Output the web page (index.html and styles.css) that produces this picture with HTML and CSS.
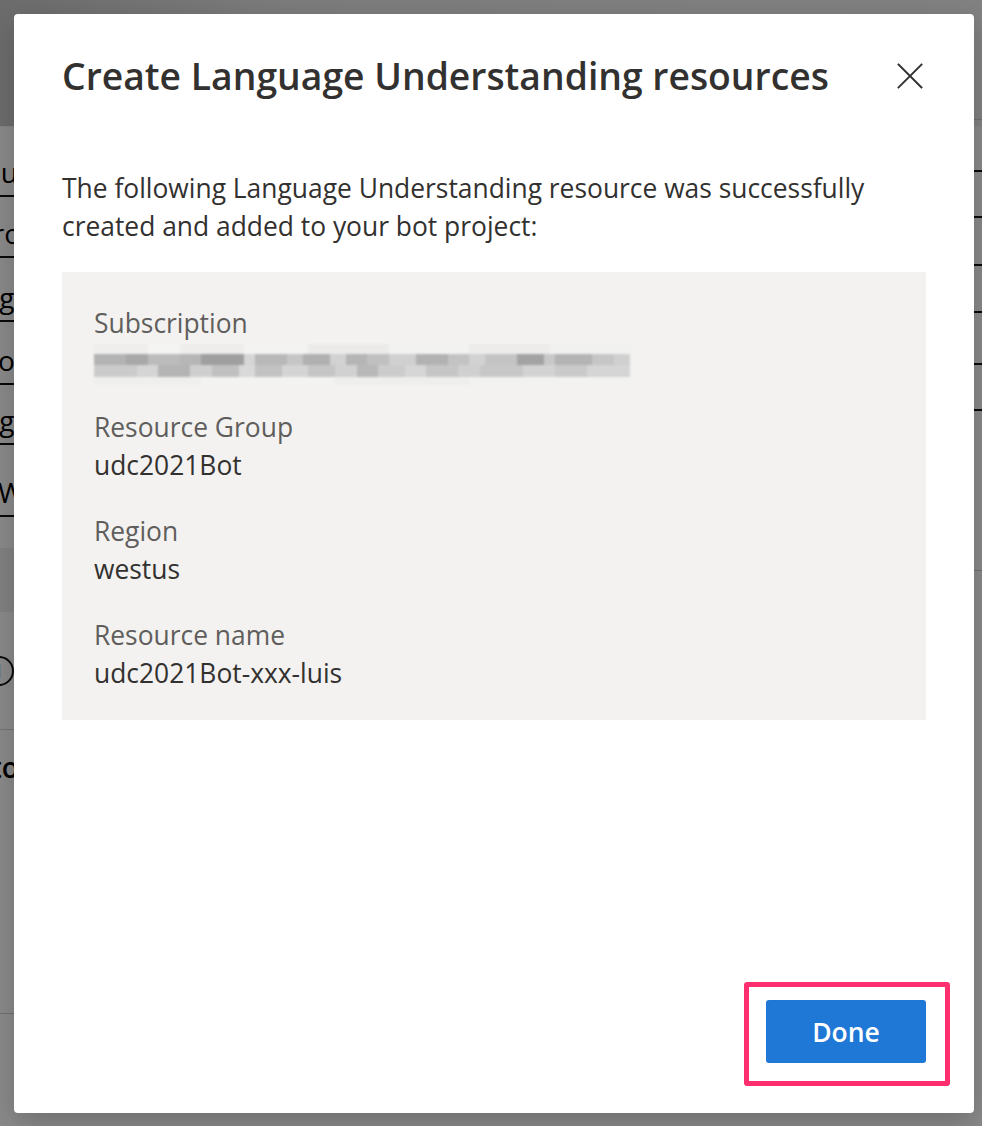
FILE: index.html
```html
<!DOCTYPE html>
<html lang="en">
<head>
<meta charset="utf-8">
<title>Create Language Understanding resources</title>
<link rel="stylesheet" href="styles.css">
</head>
<body>
<div class="page">
  <div class="page-header"></div>
  <div class="page-body">
    <div class="col-left">
      <div class="row r1"><span class="frag f1">Group</span></div>
      <div class="row r2"><span class="frag f2">Production</span></div>
      <div class="row r3"><span class="frag f3">Language</span></div>
      <div class="row r4"><span class="frag f4">ofs</span></div>
      <div class="row r5"><span class="frag f3">Language</span></div>
      <div class="row r6"><span class="frag f6">West US</span></div>
      <div class="band"></div>
      <div class="row r7 noline"><span class="info">i</span></div>
      <div class="row r8"><span class="frag bold">Connect to</span></div>
      <div class="row r9"></div>
    </div>
    <div class="col-right">
      <div class="rrow h1"></div>
      <div class="rrow h2"></div>
      <div class="rrow h3"></div>
      <div class="rrow h4"></div>
      <div class="rrow h5"></div>
      <div class="rrow h6"></div>
      <div class="rrow h7"></div>
      <div class="rrow h8 faint"></div>
    </div>
  </div>
</div>

<div class="overlay">
  <div class="modal" role="dialog" aria-labelledby="dlg-title">
    <div class="modal-head">
      <h1 id="dlg-title" class="modal-title">Create Language Understanding resources</h1>
      <button class="close-btn" aria-label="Close">
        <svg width="26" height="26" viewBox="0 0 26 26" aria-hidden="true">
          <path d="M1.5 1.5 L24.5 24.5 M24.5 1.5 L1.5 24.5" stroke="#323130" stroke-width="1.9" stroke-linecap="square" fill="none"/>
        </svg>
      </button>
    </div>
    <p class="intro">The following Language Understanding resource was successfully created and added to your bot project:</p>
    <div class="summary">
      <div class="field">
        <div class="label">Subscription</div>
        <div class="blurred" aria-label="hidden subscription">
          <div class="px px1"></div>
          <div class="px px2"></div>
          <div class="px px3"></div>
          <div class="px px4"></div>
        </div>
      </div>
      <div class="field">
        <div class="label">Resource Group</div>
        <div class="value">udc2021Bot</div>
      </div>
      <div class="field">
        <div class="label">Region</div>
        <div class="value">westus</div>
      </div>
      <div class="field">
        <div class="label">Resource name</div>
        <div class="value">udc2021Bot-xxx-luis</div>
      </div>
    </div>
    <div class="modal-foot">
      <div class="highlight">
        <button class="primary">Done</button>
      </div>
    </div>
  </div>
</div>
</body>
</html>
```

FILE: styles.css
```css
* { box-sizing: border-box; }

html, body {
  margin: 0;
  padding: 0;
  width: 982px;
  height: 1126px;
  overflow: hidden;
}

body {
  position: relative;
  font-family: "Open Sans", "Noto Sans", "Liberation Sans", sans-serif;
  color: #323130;
  background: #ffffff;
}

/* ---------- background page (mostly hidden) ---------- */
.page {
  width: 982px;
  height: 1126px;
  display: flex;
  flex-direction: column;
}

.page-header {
  height: 127px;
  flex: none;
  background: linear-gradient(90deg, #c8c8c8 0%, #e6e6e6 30%, #f0f0f0 100%);
  border-bottom: 1px solid #f4f4f4;
}

.page-body {
  flex: 1;
  display: flex;
}

.col-left {
  width: 500px;
  display: flex;
  flex-direction: column;
  overflow: hidden;
}

.row {
  display: flex;
  align-items: flex-end;
  padding-bottom: 4px;
  border-bottom: 2px solid #111;
  font-size: 28px;
  line-height: 38px;
  color: #000;
  overflow: hidden;
  white-space: nowrap;
  flex: none;
}
.row.noline { border-bottom: 1px solid #d8d8d8; align-items: center; padding-bottom: 0; }

.frag { display: inline-block; }
.f1 { margin-left: -48px; }
.f2 { margin-left: -24px; }
.f3 { margin-left: -96px; }
.f4 { margin-left: -2px; }
.f6 { margin-left: -2px; }
.frag.bold { font-weight: 600; margin-left: -128px; }

.r1 { height: 70px; }
.r2 { height: 61px; }
.r3 { height: 64px; }
.r4 { height: 63px; }
.r5 { height: 60px; }
.r6 { height: 72px; }
.band { height: 64px; background: #f0f0f0; margin-top: 31px; flex: none; }
.r7 { height: 118px; }
.r8 { height: 56px; border-bottom: none; padding-bottom: 0; }
.r9 { height: 228px; border-bottom: 1px solid #cfcfcf; }

.info {
  width: 30px;
  height: 30px;
  border: 2px solid #111;
  border-radius: 50%;
  display: inline-flex;
  align-items: center;
  justify-content: center;
  font-size: 20px;
  line-height: 1;
  margin-left: -16px;
}

.col-right {
  flex: 1;
  display: flex;
  flex-direction: column;
  margin-top: -127px;
}
.rrow { border-bottom: 2px solid #111; flex: none; }
.rrow.faint, .rrow.h1 { border-bottom: 1px solid #cfcfcf; }
.h1 { height: 120px; }
.h2 { height: 52px; }
.h3 { height: 46px; }
.h4 { height: 48px; }
.h5 { height: 47px; }
.h6 { height: 52px; }
.h7 { height: 46px; }
.h8 { height: 160px; }

/* ---------- overlay + dialog ---------- */
.overlay {
  position: absolute;
  inset: 0;
  background: rgba(0, 0, 0, 0.46);
  padding: 14px 8px 13px 14px;
  display: flex;
}

.modal {
  flex: 1;
  background: #ffffff;
  border-radius: 4px;
  box-shadow: 0 10px 30px rgba(0, 0, 0, 0.2);
  display: flex;
  flex-direction: column;
  padding: 0 48px 50px 48px;
}

.modal-head {
  display: flex;
  align-items: center;
  justify-content: space-between;
  height: 124px;
  flex: none;
}

.modal-title {
  margin: 0;
  font-size: 37.3px;
  font-weight: 550;
  line-height: 48px;
  color: #323130;
}

.close-btn {
  border: none;
  background: transparent;
  padding: 0;
  width: 26px;
  height: 26px;
  margin-right: 3px;
  display: flex;
}

.intro {
  margin: 31px 0 27px 0;
  font-size: 26.4px;
  line-height: 38px;
  color: #323130;
}

.summary {
  background: #f3f2f1;
  padding: 32px 32px 28px 32px;
  display: flex;
  flex-direction: column;
  gap: 28px;
}

.label {
  font-size: 26.4px;
  line-height: 38px;
  color: #605e5c;
}

.value {
  font-size: 26.4px;
  line-height: 38px;
  color: #323130;
}

.blurred {
  width: 536px;
  height: 38px;
  display: flex;
  flex-direction: column;
  padding-top: 2px;
  filter: blur(0.8px);
}
.px { flex: none; }
.px1 {
  height: 10px;
  background: linear-gradient(90deg,
    #efeeed 0 10%, #f4f4f3 10% 16%, #eeedec 16% 28%, #f3f3f2 28% 40%,
    #ecebea 40% 55%, #f2f2f1 55% 70%, #edeceb 70% 85%, #f1f1f0 85% 100%);
}
.px2 {
  height: 11px;
  background: linear-gradient(90deg,
    #b3b3b3 0 6%, #a8a8a8 6% 10%, #bcbcbc 10% 16%, #b6b6b6 16% 20%, #9f9f9f 20% 28%,
    #d6d6d6 28% 30%, #b8b8b8 30% 36%, #c6c6c6 36% 39%, #b0b0b0 39% 44%,
    #d2d2d2 44% 47%, #b5b5b5 47% 51%, #c0c0c0 51% 55%, #d0d0d0 55% 60%,
    #b2b2b2 60% 66%, #c3c3c3 66% 70%, #d2d2d2 70% 73%, #c4c4c4 73% 79%,
    #a3a3a3 79% 84%, #c8c8c8 84% 86%, #b4b4b4 86% 93%, #c6c6c6 93% 97%, #d0d0d0 97% 100%);
}
.px3 {
  height: 12px;
  background: linear-gradient(90deg,
    #cbcbcb 0 8%, #d5d5d5 8% 12%, #b4b4b4 12% 18%, #cfcfcf 18% 22%, #c0c0c0 22% 27%,
    #d9d9d9 27% 30%, #c2c2c2 30% 35%, #d4d4d4 35% 40%, #c5c5c5 40% 45%,
    #d1d1d1 45% 49%, #b8b8b8 49% 53%, #cccccc 53% 58%, #d6d6d6 58% 62%,
    #c6c6c6 62% 68%, #d0d0d0 68% 72%, #c7c7c7 72% 80%, #d3d3d3 80% 86%,
    #cacaca 86% 92%, #d5d5d5 92% 100%);
}
.px4 {
  height: 8px;
  background: linear-gradient(90deg,
    #efefee 0 20%, #f3f3f2 20% 45%, #eeeeed 45% 70%, #f2f2f1 70% 100%);
}

.modal-foot {
  margin-top: auto;
  display: flex;
  justify-content: flex-end;
}

.highlight {
  border: 5px solid #ff2e6f;
  border-radius: 3px;
  padding: 13px 19px 18px 17px;
  margin-right: -24px;
  margin-bottom: -23px;
}

.primary {
  display: block;
  width: 160px;
  height: 63px;
  border: none;
  border-radius: 3px;
  background: #1f78d6;
  color: #ffffff;
  font-family: inherit;
  font-size: 26.5px;
  font-weight: 550;
  padding: 0;
}
```
